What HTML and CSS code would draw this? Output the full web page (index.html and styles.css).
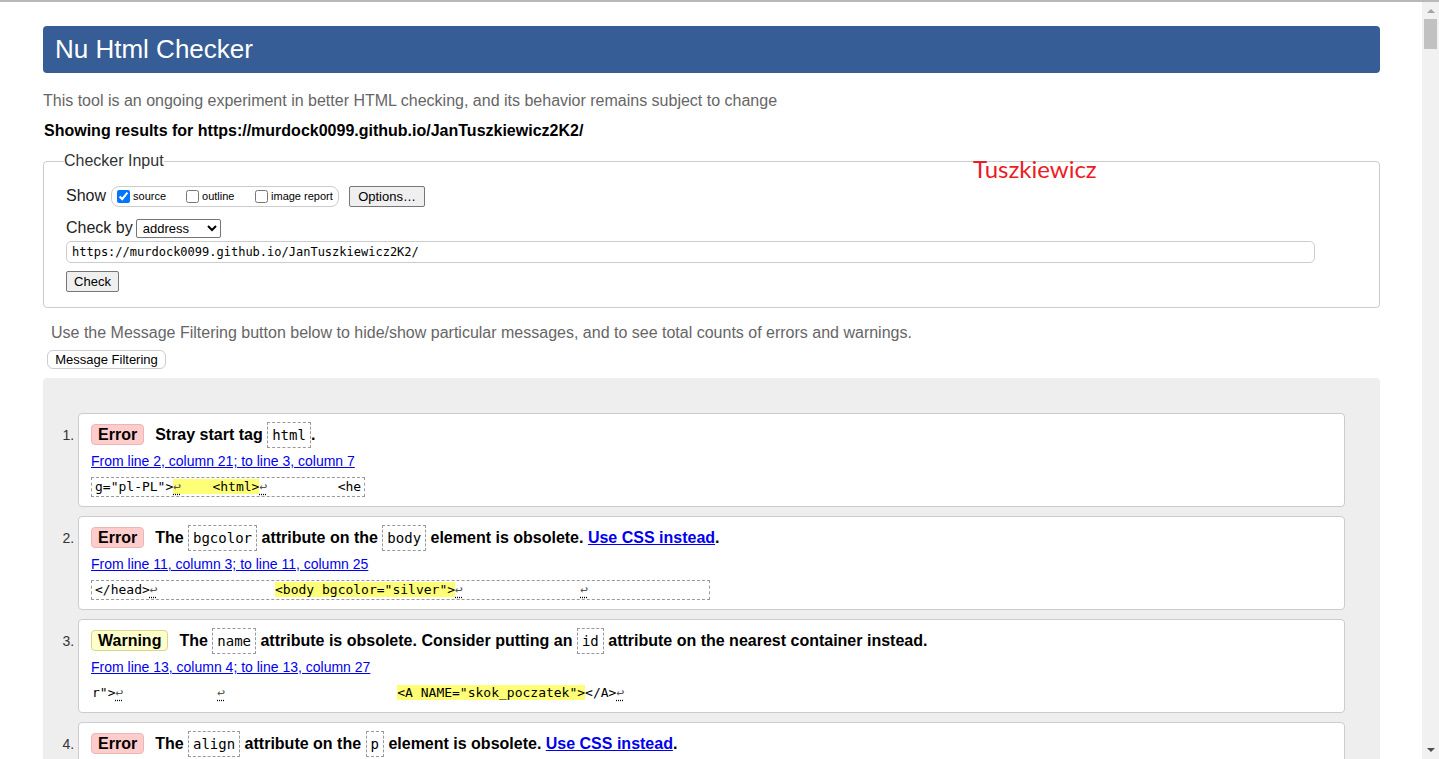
FILE: index.html
```html
<!DOCTYPE html>
<html lang="en">
<head>
<meta charset="utf-8">
<title>Nu Html Checker</title>
<link rel="stylesheet" href="styles.css">
</head>
<body>
<div class="topline"></div>
<div class="frame">
  <main class="page">
    <h1 class="title">Nu Html Checker</h1>
    <p class="intro">This tool is an ongoing experiment in better HTML checking, and its behavior remains subject to change</p>
    <p class="showing">Showing results for https://murdock0099.github.io/JanTuszkiewicz2K2/</p>

    <fieldset class="input-box">
      <legend>Checker Input</legend>
      <div class="row show-row">
        <span>Show</span>
        <div class="opts">
          <label class="o1"><input type="checkbox" checked>source</label>
          <label class="o2"><input type="checkbox">outline</label>
          <label class="o3"><input type="checkbox">image report</label>
        </div>
        <button class="btn options">Options…</button>
      </div>
      <div class="row by-row">
        <span>Check by</span>
        <select class="sel"><option>address</option></select>
      </div>
      <input class="url" type="text" value="https://murdock0099.github.io/JanTuszkiewicz2K2/">
      <button class="btn check">Check</button>
    </fieldset>

    <div class="stamp">Tuszkiewicz</div>

    <p class="filter-note">Use the Message Filtering button below to hide/show particular messages, and to see total counts of errors and warnings.</p>
    <button class="filter-btn">Message Filtering</button>

    <ol class="results">
      <li class="card">
        <p class="msg"><strong class="badge err">Error</strong>Stray start tag <code class="cd">html</code>.</p>
        <p class="loc"><a href="#">From line 2, column 21; to line 3, column 7</a></p>
        <code class="extract">g="pl-PL"&gt;<b class="hl"><span class="lf">↩</span>    &lt;html&gt;</b><span class="lf">↩</span>         &lt;he</code>
      </li>
      <li class="card">
        <p class="msg"><strong class="badge err">Error</strong>The <code class="cd">bgcolor</code> attribute on the <code class="cd">body</code> element is obsolete. <a href="#">Use CSS instead</a>.</p>
        <p class="loc"><a href="#">From line 11, column 3; to line 11, column 25</a></p>
        <code class="extract">&lt;/head&gt;<span class="lf">↩</span>               <b class="hl">&lt;body bgcolor="silver"&gt;</b><span class="lf">↩</span>               <span class="lf">↩</span>               </code>
      </li>
      <li class="card">
        <p class="msg"><strong class="badge warn">Warning</strong>The <code class="cd">name</code> attribute is obsolete. Consider putting an <code class="cd">id</code> attribute on the nearest container instead.</p>
        <p class="loc"><a href="#">From line 13, column 4; to line 13, column 27</a></p>
        <code class="extract plain">r"&gt;<span class="lf">↩</span>            <span class="lf">↩</span>                      <b class="hl">&lt;A NAME="skok_poczatek"&gt;</b>&lt;/A&gt;<span class="lf">↩</span></code>
      </li>
      <li class="card">
        <p class="msg"><strong class="badge err">Error</strong>The <code class="cd">align</code> attribute on the <code class="cd">p</code> element is obsolete. <a href="#">Use CSS instead</a>.</p>
      </li>
    </ol>
  </main>
  <div class="scrollbar">
    <span class="arrow up"></span>
    <span class="thumb"></span>
    <span class="spacer"></span>
    <span class="arrow down"></span>
  </div>
</div>
</body>
</html>
```

FILE: styles.css
```css
* { box-sizing: border-box; }

html, body {
  margin: 0;
  height: 100%;
  overflow: hidden;
}

body {
  font-family: "Liberation Sans", Arial, sans-serif;
  font-size: 16px;
  color: #000;
  background: #fff;
}

.topline {
  height: 2px;
  background: #b9b9b9;
}

.frame {
  display: flex;
  height: 757px;
}

.page {
  flex: 1;
  min-width: 0;
  position: relative;
  padding: 24px 42px 0 43px;
}

.title {
  margin: 0;
  height: 47px;
  line-height: 47px;
  padding-left: 12px;
  background: #365d95;
  color: #fff;
  border-radius: 4px;
  font-size: 26px;
  font-weight: normal;
}

.intro {
  margin: 19px 0 0;
  line-height: 18px;
  color: #666;
}

.showing {
  margin: 12px 0 0 1px;
  line-height: 18px;
  font-weight: bold;
}

.input-box {
  margin: 12px 0 0;
  padding: 0 22px 15px;
  border: 1px solid #ccc;
  border-radius: 4px;
  min-width: 0;
}

.input-box legend {
  padding: 0;
  margin-left: -2px;
  line-height: 18px;
  font-size: 16px;
  color: #333;
}

.row {
  display: flex;
  align-items: center;
}

.show-row {
  margin-top: 15px;
  height: 22px;
  color: #222;
}

.opts {
  display: flex;
  align-items: center;
  margin-left: 5px;
  height: 21px;
  padding: 0 0 0 1px;
  border: 1px solid #ccc;
  border-radius: 8px;
  font-size: 11px;
  color: #000;
}

.opts label {
  display: flex;
  align-items: center;
}

.o1, .o2 { width: 69px; }
.o3 { width: 87px; }

.opts input {
  margin: 0 3px 0 4px;
  width: 13px;
  height: 13px;
}

.btn {
  font-family: "Liberation Sans", Arial, sans-serif;
  font-size: 13px;
  color: #000;
  background: #efefef;
  border: 1px solid #767676;
  border-radius: 2px;
  padding: 0;
  height: 21px;
}

.options {
  margin-left: 10px;
  width: 76px;
}

.by-row {
  margin-top: 11px;
  height: 20px;
  color: #222;
}

.sel {
  margin-left: 3px;
  width: 85px;
  height: 19px;
  font-family: "Liberation Sans", Arial, sans-serif;
  font-size: 13px;
  color: #000;
  background: #fff;
  border: 1px solid #767676;
  border-radius: 2px;
  padding: 0 0 0 2px;
}

.url {
  display: block;
  margin-top: 3px;
  width: calc(100% - 42px);
  height: 22px;
  padding: 0 5px;
  border: 1px solid #ccc;
  border-radius: 5px;
  font-family: "DejaVu Sans Mono", "Liberation Mono", monospace;
  font-size: 12px;
  color: #000;
}

.check {
  display: block;
  margin-top: 8px;
  width: 53px;
}

.stamp {
  position: absolute;
  left: 973px;
  top: 155px;
  font-family: Lato, "Open Sans", sans-serif;
  font-size: 24px;
  line-height: 24px;
  color: #ec1c24;
}

.filter-note {
  margin: 16px 0 0;
  padding-left: 8px;
  line-height: 18px;
  color: #666;
}

.filter-btn {
  display: block;
  margin: 8px 0 0 4px;
  width: 119px;
  height: 19px;
  padding: 0;
  background: #fff;
  border: 1px solid #ccc;
  border-radius: 6px;
  font-family: "Liberation Sans", Arial, sans-serif;
  font-size: 13px;
  color: #000;
}

.results {
  margin: 9px 0 0;
  padding: 35px 35px 40px;
  background: #eee;
  border-radius: 4px;
  list-style: decimal outside;
}

.card {
  background: #fff;
  border: 1px solid #ccc;
  border-radius: 4px;
  padding: 8px 12px 9px;
  margin-bottom: 9px;
  height: 94px;
}

.card::marker {
  font-size: 14px;
  color: #333;
}

.msg {
  margin: 0;
  line-height: 26px;
  height: 26px;
  font-weight: bold;
  white-space: nowrap;
}

.msg a {
  color: #00e;
}

.badge {
  display: inline-block;
  line-height: 19px;
  padding: 0 6px;
  border-radius: 4px;
  margin-right: 11px;
}

.err {
  background: #fcc;
  border: 1px solid #ebb6b6;
}

.warn {
  background: #ffc;
  border: 1px solid #d6d68f;
}

.cd {
  display: inline-block;
  font-family: "DejaVu Sans Mono", "Liberation Mono", monospace;
  font-size: 14px;
  font-weight: normal;
  line-height: 22px;
  padding: 1px 4px;
  border: 1px dashed #999;
}

.loc {
  margin: 5px 0 0;
  line-height: 16px;
  font-size: 14px;
}

.loc a {
  color: #00e;
}

.extract {
  display: inline-block;
  margin-top: 8px;
  padding: 0 3px;
  border: 1px dashed #999;
  font-family: "DejaVu Sans Mono", "Liberation Mono", monospace;
  font-size: 13px;
  line-height: 18px;
  white-space: pre;
  color: #000;
}

.extract.plain {
  border-color: transparent;
  padding: 0;
}

.hl {
  font-weight: normal;
  background: #ff7;
}

.lf {
  color: #555;
  text-decoration: underline dotted #000;
  text-underline-offset: 3px;
}

.scrollbar {
  width: 17px;
  background: #f1f1f1;
  display: flex;
  flex-direction: column;
  align-items: center;
}

.arrow {
  width: 0;
  height: 0;
  border-left: 4px solid transparent;
  border-right: 4px solid transparent;
}

.arrow.up {
  margin-top: 7px;
  border-bottom: 4px solid #a3a3a3;
}

.arrow.down {
  margin-bottom: 7px;
  border-top: 4px solid #505050;
}

.thumb {
  margin-top: 6px;
  width: 13px;
  height: 30px;
  background: #c1c1c1;
}

.spacer {
  flex: 1;
}
```
